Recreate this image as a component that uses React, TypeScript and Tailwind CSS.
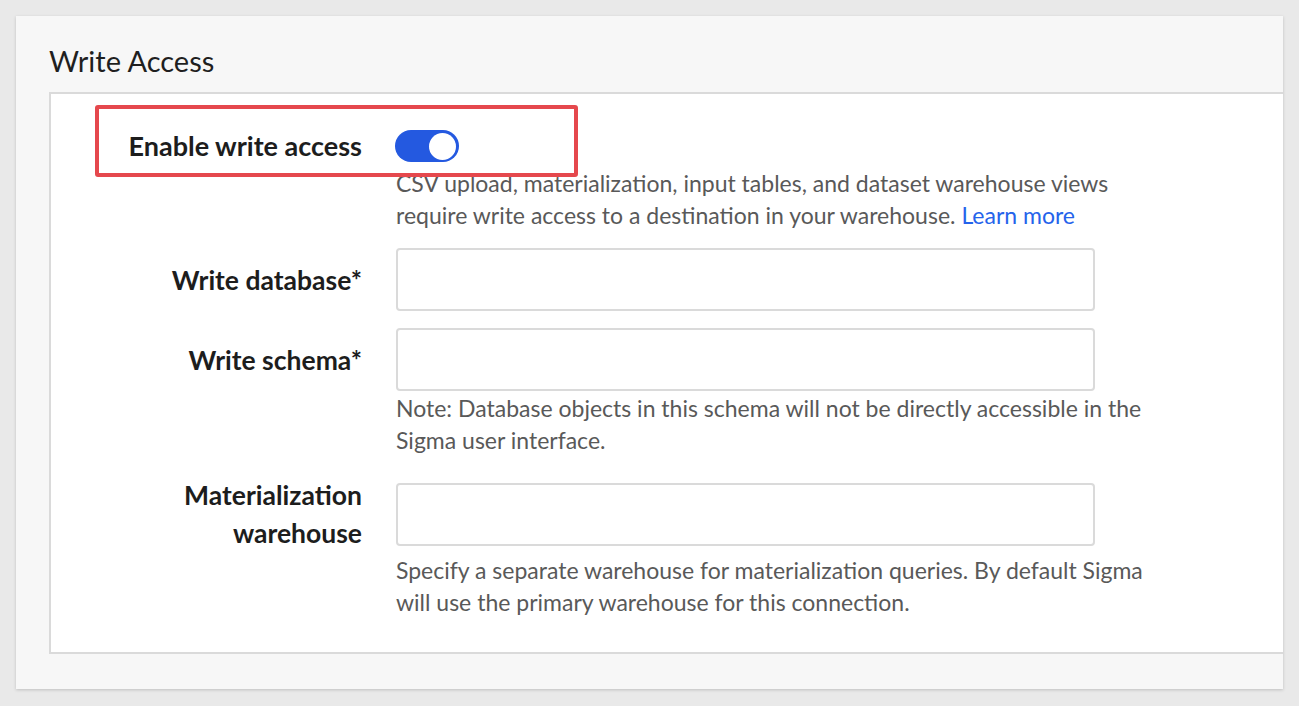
export default function App() {
  return (
    <div className="min-h-screen w-full bg-[#e9e9e9] pt-[16px] pl-[16px] pr-[16px] font-['Lato',sans-serif]">
      <div className="w-[1267px] bg-[#f7f7f7] pl-[33px] pb-[35px] shadow-[0_1px_3px_rgba(0,0,0,0.18)]">
        <h2 className="h-[76px] pt-[27px] text-[29px] leading-[36px] text-[#1f1f1f]">Write Access</h2>
        <div className="relative border-t-2 border-l-2 border-b-2 border-[#dadada] bg-white pt-[36px] pb-[34px]">
          <div className="pointer-events-none absolute left-[44px] top-[11px] h-[72px] w-[483px] rounded-[3px] border-4 border-[#e5484d]" />

          <div className="flex items-center">
            <div className="w-[311px] text-right text-[27px] font-bold leading-[32px] text-[#1d1d1d]">Enable write access</div>
            <div className="ml-[33px] flex h-[32px] w-[64px] items-center justify-end rounded-full bg-[#2459e0] pr-[3px]">
              <div className="h-[27px] w-[27px] rounded-full bg-white" />
            </div>
          </div>
          <p className="ml-[345px] mt-[5px] whitespace-nowrap text-[23px] leading-[32px] text-[#595959]">
            CSV upload, materialization, input tables, and dataset warehouse views
            <br />
            require write access to a destination in your warehouse.{" "}
            <a className="text-[#2563eb]">Learn more</a>
          </p>

          <div className="mt-[17px] flex items-center">
            <div className="w-[311px] text-right text-[26.5px] font-bold leading-[38px] text-[#1d1d1d]">Write database*</div>
            <input className="ml-[34px] h-[63px] w-[699px] rounded-[4px] border-2 border-[#dadada] bg-white outline-none" />
          </div>

          <div className="mt-[17px] flex items-center">
            <div className="w-[311px] text-right text-[26.5px] font-bold leading-[38px] text-[#1d1d1d]">Write schema*</div>
            <input className="ml-[34px] h-[63px] w-[699px] rounded-[4px] border-2 border-[#dadada] bg-white outline-none" />
          </div>
          <p className="ml-[345px] mt-[1px] whitespace-nowrap text-[23px] leading-[32px] text-[#595959]">
            Note: Database objects in this schema will not be directly accessible in the
            <br />
            Sigma user interface.
          </p>

          <div className="mt-[20px] flex items-center">
            <div className="w-[311px] text-right text-[26.5px] font-bold leading-[38px] text-[#1d1d1d]">
              Materialization
              <br />
              warehouse
            </div>
            <input className="ml-[34px] h-[63px] w-[699px] rounded-[4px] border-2 border-[#dadada] bg-white outline-none" />
          </div>
          <p className="ml-[345px] mt-[2px] whitespace-nowrap text-[23px] leading-[32px] text-[#595959]">
            Specify a separate warehouse for materialization queries. By default Sigma
            <br />
            will use the primary warehouse for this connection.
          </p>
        </div>
      </div>
    </div>
  );
}
